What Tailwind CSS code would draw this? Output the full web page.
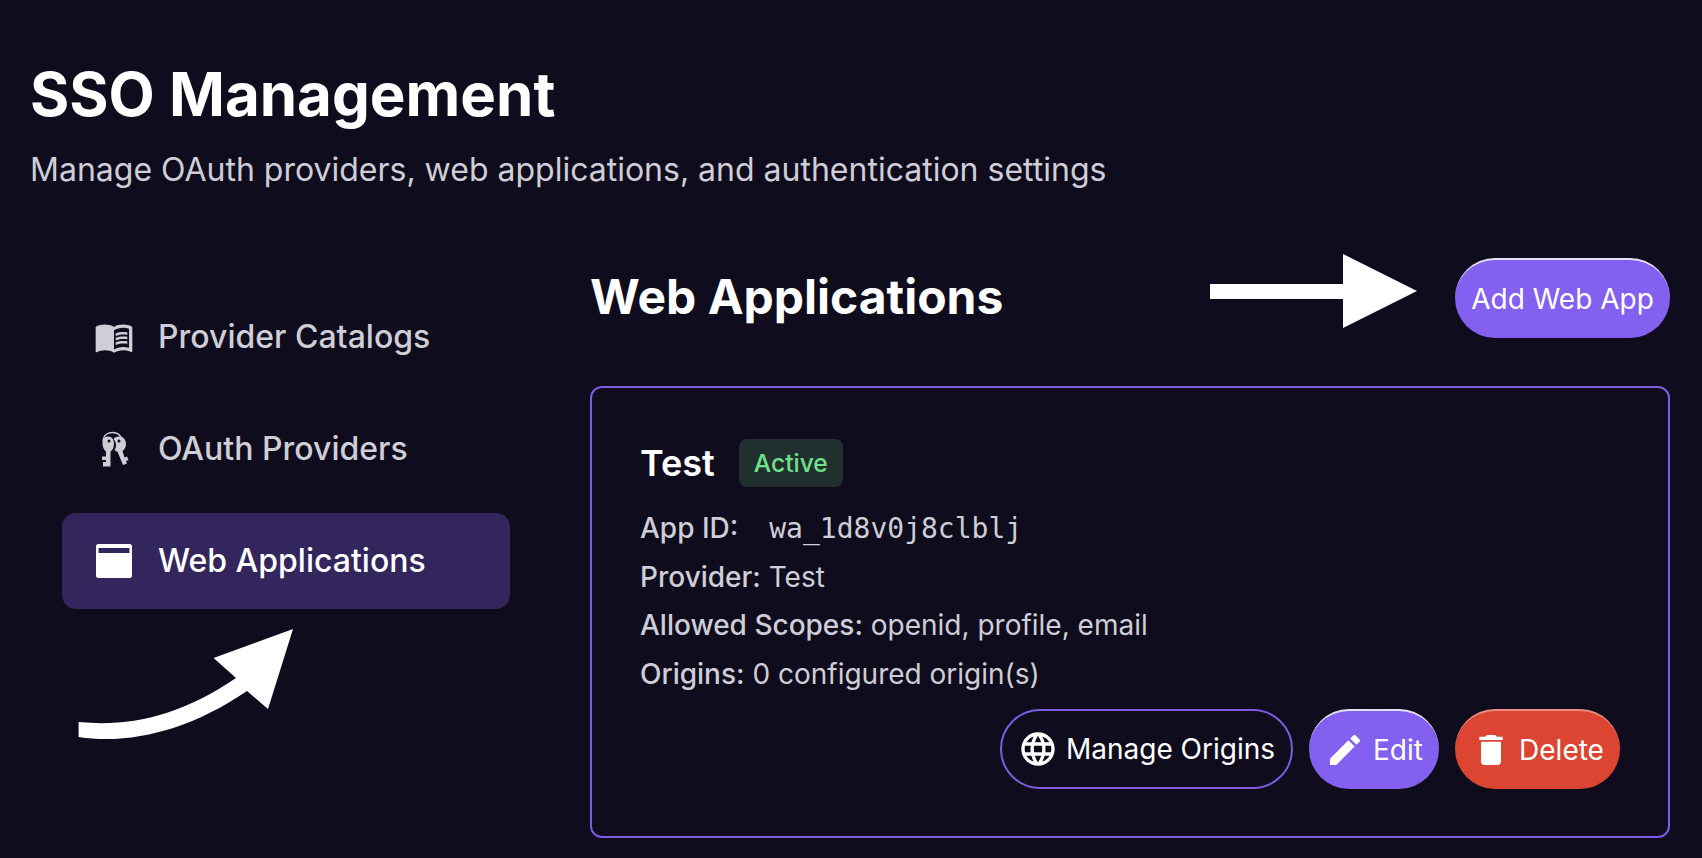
<!DOCTYPE html>
<html lang="en">
  <head>
    <meta charset="UTF-8" />
    <title>SSO Management</title>
    <script src="https://cdn.jsdelivr.net/npm/@tailwindcss/browser@4"></script>
  </head>
  <body class="relative h-[858px] overflow-hidden bg-[#0f0c1d] font-[Inter,sans-serif] text-white">
    <div class="pl-[30px] pr-[32px] pt-[58px]">
      <h1 class="text-[60px] leading-[72px] font-bold">SSO Management</h1>
      <p class="mt-[18px] text-[32px] leading-[44px] text-[#cfced6]">Manage OAuth providers, web applications, and authentication settings</p>

      <div class="mt-[66px] flex">
        <nav class="ml-[32px] mt-[31px] flex w-[448px] shrink-0 flex-col gap-[16px] text-[32px] font-medium">
          <a class="flex h-[96px] items-center gap-[24px] rounded-[14px] pl-[32px] text-[#cfced6]">
            <svg class="h-[40px] w-[40px] fill-current" viewBox="0 0 24 24"><path d="M21 5c-1.11-.35-2.33-.5-3.5-.5-1.95 0-4.05.4-5.5 1.5-1.45-1.1-3.55-1.5-5.5-1.5S2.45 4.9 1 6v14.65c0 .25.25.5.5.5.1 0 .15-.05.25-.05C3.1 20.45 5.05 20 6.5 20c1.95 0 4.05.4 5.5 1.5 1.35-.85 3.8-1.5 5.5-1.5 1.65 0 3.35.3 4.75 1.05.1.05.15.05.25.05.25 0 .5-.25.5-.5V6c-.6-.45-1.25-.75-2-1zm0 13.5c-1.1-.35-2.3-.5-3.5-.5-1.7 0-4.15.65-5.5 1.5V8c1.35-.85 3.8-1.5 5.5-1.5 1.2 0 2.4.15 3.5.5v11.5z" /><path d="M17.5 10.5c.88 0 1.73.09 2.5.26V9.24c-.79-.15-1.64-.24-2.5-.24-1.7 0-3.24.29-4.5.83v1.66c1.13-.64 2.7-.99 4.5-.99zM13 12.49v1.66c1.13-.64 2.7-.99 4.5-.99.88 0 1.73.09 2.5.26V11.9c-.79-.15-1.64-.24-2.5-.24-1.7 0-3.24.3-4.5.83zM17.5 14.33c-1.7 0-3.24.29-4.5.83v1.66c1.13-.64 2.7-.99 4.5-.99.88 0 1.73.09 2.5.26v-1.52c-.79-.16-1.64-.24-2.5-.24z" /></svg>
            Provider Catalogs
          </a>
          <a class="flex h-[96px] items-center gap-[24px] rounded-[14px] pl-[32px] text-[#cfced6]">
            <!-- two hanging keys on a ring -->
            <svg class="h-[40px] w-[40px] fill-current" viewBox="0 0 40 40">
              <path fill="none" stroke="currentColor" stroke-width="1.3" d="M9 12C9.500 6 14 3.500 18.500 3.500C23 3.500 26.500 6 27.500 10" />
              <path fill-rule="evenodd" d="M14 7.500C10 7.500 8.500 11 8.500 14.500C8.500 18 10 21 12 22.500V27.500H8V31H12V33H9V37.500H16.500V22.500C18.500 21 20 18.500 20 15C20 11 18 7.500 14 7.500ZM15 10.500A1.500 1.500 0 1 1 15 13.500A1.500 1.500 0 0 1 15 10.500Z" />
              <path fill-rule="evenodd" d="M25 7.500C22.500 7.500 20.500 8.500 19.500 10C21 11.500 22 13.500 22 16C22 18 21.500 19.500 20.500 21C21.500 22 22.500 22.500 23.500 22.800L29 36L33 34.500L32 32L34.500 31L33 27.500L30.500 28.500L28.500 22C30.500 20.500 32 18 32 15C32 11 29.500 7.500 25 7.500ZM25 10.500A1.500 1.500 0 1 1 25 13.500A1.500 1.500 0 0 1 25 10.500Z" />
            </svg>
            OAuth Providers
          </a>
          <a class="flex h-[96px] items-center gap-[24px] rounded-[14px] bg-[#32265c] pl-[32px] text-white">
            <svg class="h-[40px] w-[40px] fill-current" viewBox="0 0 40 40"><path fill-rule="evenodd" d="M4.500 3h31A2.500 2.500 0 0 1 38 5.500v29a2.500 2.500 0 0 1-2.500 2.500h-31A2.500 2.500 0 0 1 2 34.500v-29A2.500 2.500 0 0 1 4.500 3zM4.500 7v5h31V7z" /></svg>
            Web Applications
          </a>
        </nav>

        <main class="ml-[80px] flex-1">
          <div class="flex h-[80px] items-start justify-between">
            <h2 class="text-[48px] leading-[78px] font-bold">Web Applications</h2>
            <button class="h-[80px] w-[215px] rounded-full border-t-2 border-[#e4dffb] bg-[#8360f0] text-[28px]">Add Web App</button>
          </div>

          <section class="mt-[48px] h-[452px] rounded-[12px] border-2 border-[#7c5ce0] pl-[48px] pr-[48px] pt-[51px]">
            <div class="flex items-center gap-[24px]">
              <h3 class="text-[36px] leading-[48px] font-semibold">Test</h3>
              <span class="flex h-[48px] w-[104px] items-center justify-center rounded-[8px] bg-[#21302e] text-[24.500px] font-medium text-[#6ee28a]">Active</span>
            </div>
            <div class="mt-[17px] text-[28px] leading-[48.500px] text-[#cfced6]">
              <p class="h-[48.500px]"><span class="font-medium">App ID:</span><code class="ml-[31px] font-['DejaVu_Sans_Mono',monospace]">wa_1d8v0j8clblj</code></p>
              <p><span class="font-medium">Provider:</span> Test</p>
              <p><span class="font-medium">Allowed Scopes:</span> openid, profile, email</p>
              <p><span class="font-medium">Origins:</span> 0 configured origin(s)</p>
            </div>
            <div class="mt-[11px] flex justify-end gap-[16px] text-[28px]">
              <button class="flex h-[80px] w-[293px] items-center justify-center gap-[8px] rounded-full border-2 border-[#7c5ce0]">
                <svg class="h-[40px] w-[40px] fill-current" viewBox="0 0 24 24"><path d="M11.990 2C6.470 2 2 6.480 2 12s4.470 10 9.990 10C17.520 22 22 17.520 22 12S17.520 2 11.990 2zm6.930 6h-2.950c-.32-1.250-.78-2.450-1.380-3.560 1.840.63 3.370 1.910 4.330 3.560zM12 4.040c.83 1.200 1.480 2.530 1.910 3.960h-3.820c.43-1.430 1.080-2.760 1.910-3.960zM4.260 14C4.100 13.360 4 12.690 4 12s.1-1.360.26-2h3.380c-.08.66-.14 1.320-.14 2 0 .68.06 1.340.14 2H4.260zm.82 2h2.950c.32 1.250.78 2.450 1.380 3.560-1.840-.63-3.370-1.900-4.330-3.560zm2.950-8H5.080c.96-1.660 2.490-2.930 4.330-3.560C8.810 5.550 8.350 6.750 8.030 8zM12 19.960c-.83-1.200-1.480-2.530-1.910-3.960h3.820c-.43 1.430-1.080 2.760-1.910 3.960zM14.340 14H9.660c-.09-.66-.16-1.320-.16-2 0-.68.07-1.350.16-2h4.680c.09.65.16 1.320.16 2 0 .68-.07 1.340-.16 2zm.25 5.560c.6-1.110 1.060-2.310 1.380-3.560h2.950c-.96 1.650-2.490 2.930-4.330 3.560zM16.360 14c.08-.66.14-1.320.14-2 0-.68-.06-1.340-.14-2h3.380c.16.64.26 1.310.26 2s-.1 1.360-.26 2h-3.380z" /></svg>
                Manage Origins
              </button>
              <button class="flex h-[80px] w-[130px] items-center justify-center gap-[8px] rounded-full border-t-2 border-[#e4dffb] bg-[#8360f0]">
                <svg class="h-[40px] w-[40px] fill-current" viewBox="0 0 24 24"><path d="M3 17.250V21h3.750L17.810 9.940l-3.750-3.750L3 17.250zM20.710 7.040c.39-.39.39-1.020 0-1.410l-2.340-2.340c-.39-.39-1.020-.39-1.410 0l-1.830 1.830 3.750 3.750 1.830-1.830z" /></svg>
                Edit
              </button>
              <button class="flex h-[80px] w-[165px] items-center justify-center gap-[8px] rounded-full border-t-2 border-[#eb8f84] bg-[#dc4532]">
                <svg class="h-[40px] w-[40px] fill-current" viewBox="0 0 24 24"><path d="M6 19c0 1.100.9 2 2 2h8c1.100 0 2-.9 2-2V7H6v12zM19 4h-3.500l-1-1h-5l-1 1H5v2h14V4z" /></svg>
                Delete
              </button>
            </div>
          </section>
        </main>
      </div>
    </div>

    <!-- annotation arrows drawn over the page -->
    <svg class="pointer-events-none absolute top-0 left-0" width="1702" height="858" viewBox="0 0 1702 858">
      <path fill="#fff" d="M1210 284H1343V254L1417 291L1343 328V299H1210Z" />
      <path fill="#fff" d="M78.600 722C130 727 180 716 236 678L213.600 658L293 629L268 709L247 691C190 730 130 745 78.600 737Z" />
    </svg>
  </body>
</html>
